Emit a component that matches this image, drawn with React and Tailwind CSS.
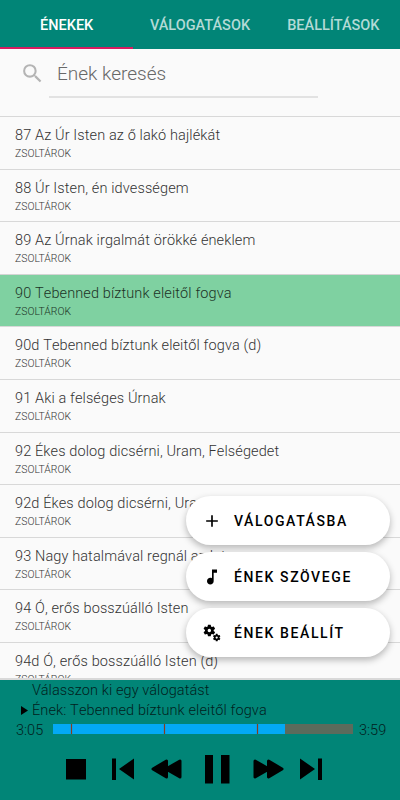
import { MdAdd, MdMiscellaneousServices, MdMusicNote, MdSearch } from "react-icons/md";

const tabs = ["ÉNEKEK", "VÁLOGATÁSOK", "BEÁLLÍTÁSOK"];

const songs = [
  "87 Az Úr Isten az ő lakó hajlékát",
  "88 Úr Isten, én idvességem",
  "89 Az Úrnak irgalmát örökké éneklem",
  "90 Tebenned bíztunk eleitől fogva",
  "90d Tebenned bíztunk eleitől fogva (d)",
  "91 Aki a felséges Úrnak",
  "92 Ékes dolog dicsérni, Uram, Felségedet",
  "92d Ékes dolog dicsérni, Uram",
  "93 Nagy hatalmával regnál az Isten",
  "94 Ó, erős bosszúálló Isten",
  "94d Ó, erős bosszúálló Isten (d)",
];

const actions = [
  { label: "VÁLOGATÁSBA", Icon: MdAdd },
  { label: "ÉNEK SZÖVEGE", Icon: MdMusicNote },
  { label: "ÉNEK BEÁLLÍT", Icon: MdMiscellaneousServices },
];

const Tabs = () => (
  <nav className="grid h-[49px] shrink-0 grid-cols-3 bg-[#018577]">
    {tabs.map((tab, i) => (
      <button
        key={tab}
        className={
          i === 0
            ? "border-b-2 border-[#d81b60] pt-1 text-[14.5px] font-medium text-white"
            : "border-b-2 border-transparent pt-1 text-[14.5px] font-medium text-[#b3dad6]"
        }
      >
        {tab}
      </button>
    ))}
  </nav>
);

const Search = () => (
  <div className="flex h-[67px] shrink-0 items-start pl-5">
    <MdSearch className="mt-3 size-[25px] text-[#b4b4b4]" />
    <div className="ml-1 h-[49px] w-[269px] border-b-2 border-[#e2e2e2] pt-3 pl-2 text-[19px] leading-[26px] font-light text-[#686868]">
      Ének keresés
    </div>
  </div>
);

const SongRow = ({ title, selected }) => (
  <li
    className={
      selected
        ? "h-[52.6px] border-t border-[#d4d4d4] bg-[#7fd1a1] pt-[9px] pl-[15px] text-[#1c3326]"
        : "h-[52.6px] border-t border-[#d8d8d8] pt-[9px] pl-[15px] text-[#333333]"
    }
  >
    <div className="text-[14.5px] leading-5 font-light tracking-[0.12px] whitespace-nowrap [font-kerning:none]">
      {title}
    </div>
    <div className="text-[10.4px] leading-4 font-light">ZSOLTÁROK</div>
  </li>
);

const Actions = () => (
  <div className="absolute top-[496px] right-[10px] flex w-[204px] flex-col gap-[7px]">
    {actions.map(({ label, Icon }) => (
      <button
        key={label}
        className="flex h-[49px] items-center rounded-full bg-white pt-px pl-4 text-sm font-medium tracking-[1.6px] text-black shadow-[0_3px_7px_rgba(0,0,0,0.28)]"
      >
        <Icon className="mr-3 size-5" />
        {label}
      </button>
    ))}
  </div>
);

const Controls = () => (
  <div className="mt-[14px] pl-[65px]">
    <svg viewBox="0 0 258 30" className="h-[30px] w-[258px] fill-black">
      <path d="M1 4h20v20.500H1z" />
      <path d="M47 3.500h4v21.500h-4zM69 3.500v21L54 14z" />
      <path
        d="M88 14l13.500-8v16zM101 14l14-8v16z"
        stroke="#000"
        strokeWidth="3"
        strokeLinejoin="round"
      />
      <path d="M140 0h8v28.500h-8zM156 0h8.500v28.500h-8.500z" />
      <path
        d="M190 6l14 8-14 8zM203.500 6l13.500 8-13.500 8z"
        stroke="#000"
        strokeWidth="3"
        strokeLinejoin="round"
      />
      <path d="M235 3.500l15 10.500-15 10.500zM253 3.500h4v21.500h-4z" />
    </svg>
  </div>
);

const Player = () => (
  <footer className="flex h-[120px] shrink-0 flex-col bg-[#018577] pt-px text-[#02211d]">
    <div className="pl-8 text-[14.5px] leading-5 font-light tracking-[0.1px]">
      Válasszon ki egy válogatást
    </div>
    <div className="flex items-center pl-[21px] text-[14.5px] leading-5 font-light tracking-[0.12px] [font-kerning:none]">
      <svg viewBox="0 0 7 9" className="mr-1 mb-[2px] h-[9px] w-[7px] fill-black">
        <path d="M0 0l7 4.500-7 4.500z" />
      </svg>
      Ének: Tebenned bíztunk eleitől fogva
    </div>
    <div className="flex h-5 items-center text-[14.5px] font-light">
      <span className="w-[53px] pl-4">3:05</span>
      <svg viewBox="0 0 300 10" className="-mt-[4px] h-[10px] w-[300px]">
        <rect width="300" height="10" fill="#5b6b5c" />
        <rect width="232" height="10" fill="#03a9f4" />
        <path d="M18.500 0v10M111.500 0v10M204.500 0v10" stroke="#8a3c1c" strokeWidth="1.2" />
      </svg>
      <span className="pl-[6px]">3:59</span>
    </div>
    <Controls />
  </footer>
);

const App = () => (
  <div className="relative flex h-[800px] w-[400px] flex-col overflow-hidden bg-[#fafafa] font-['Roboto',sans-serif]">
    <Tabs />
    <Search />
    <ul className="min-h-0 flex-1 overflow-hidden border-b-2 border-[#d9d9d9]">
      {songs.map((title, i) => (
        <SongRow key={title} title={title} selected={i === 3} />
      ))}
    </ul>
    <Player />
    <Actions />
  </div>
);

export default App;
